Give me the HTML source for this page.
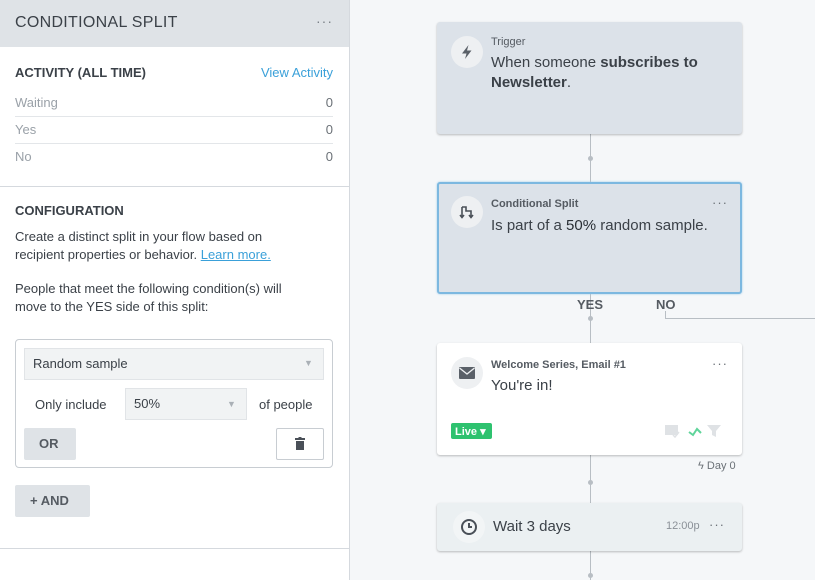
<!DOCTYPE html>
<html><head><style>
*{box-sizing:border-box;margin:0;padding:0}
body{width:815px;height:580px;overflow:hidden;background:#f5f7f9;font-family:"Liberation Sans",sans-serif;color:#3b4148;position:relative}
.a{position:absolute}
#left{left:0;top:0;width:350px;height:580px;background:#fff;border-right:1px solid #d5d9de}
.hdr{left:0;top:0;width:349px;height:47px;background:#dfe3e7}
.t{position:absolute;white-space:nowrap}
.row{position:absolute;left:15px;width:318px;font-size:13px;color:#9aa1a8}
.row span{position:absolute;right:0;color:#6b7177}
.sep{position:absolute;left:15px;width:318px;height:1px;background:#e3e6e9}
.card{position:absolute;left:437px;width:305px;border-radius:3px;box-shadow:0 1px 2px rgba(0,0,0,.25)}
.ic{position:absolute;left:14px;top:14px;width:32px;height:32px;border-radius:50%;background:#eef0f2}
.dots{position:absolute;right:14px;top:13px;font-size:13px;letter-spacing:1px;color:#6b7177}
.ln{position:absolute;left:590px;width:1px;background:#b8bec4}
.dot{position:absolute;left:588px;width:5px;height:5px;border-radius:50%;background:#b8bec4}
</style></head><body>
<div id="left" class="a">
<div class="a hdr"></div>
<div class="t" style="left:15px;top:14px;font-size:16px;letter-spacing:.3px;color:#3b4148">CONDITIONAL SPLIT</div>
<div class="t" style="left:316px;top:13px;font-size:14px;letter-spacing:1px;color:#7a8087">···</div>
<div class="t" style="left:15px;top:65px;font-size:13px;font-weight:bold">ACTIVITY (ALL TIME)</div>
<div class="t" style="right:16px;top:65px;font-size:13px;color:#3aa0d9">View Activity</div>
<div class="row" style="top:95px">Waiting<span>0</span></div>
<div class="sep" style="top:116px"></div>
<div class="row" style="top:122px">Yes<span>0</span></div>
<div class="sep" style="top:143px"></div>
<div class="row" style="top:149px">No<span>0</span></div>
<div class="a" style="left:0;top:186px;width:349px;height:1px;background:#d5d9de"></div>
<div class="t" style="left:15px;top:203px;font-size:13px;font-weight:bold">CONFIGURATION</div>
<div class="t" style="left:15px;top:228px;font-size:13px;line-height:18px">Create a distinct split in your flow based on<br>recipient properties or behavior. <span style="color:#3aa0d9;text-decoration:underline">Learn more.</span></div>
<div class="t" style="left:15px;top:280px;font-size:13px;line-height:18px">People that meet the following condition(s) will<br>move to the YES side of this split:</div>
<div class="a" style="left:15px;top:339px;width:318px;height:129px;border:1px solid #c8cdd2;border-radius:4px"></div>
<div class="a" style="left:24px;top:348px;width:300px;height:32px;background:#f1f3f4;border:1px solid #e1e4e7"></div>
<div class="t" style="left:33px;top:356px;font-size:13px">Random sample</div>
<div class="t" style="left:304px;top:358px;font-size:9px;color:#aab0b6">▼</div>
<div class="t" style="left:35px;top:397px;font-size:13px">Only include</div>
<div class="a" style="left:125px;top:388px;width:122px;height:32px;background:#f1f3f4;border:1px solid #e1e4e7"></div>
<div class="t" style="left:134px;top:396px;font-size:13px">50%</div>
<div class="t" style="left:227px;top:399px;font-size:9px;color:#aab0b6">▼</div>
<div class="t" style="left:259px;top:397px;font-size:13px">of people</div>
<div class="a" style="left:24px;top:428px;width:52px;height:32px;background:#dfe3e7;border-radius:2px"></div>
<div class="t" style="left:39px;top:436px;font-size:13px;font-weight:bold;color:#555b62">OR</div>
<div class="a" style="left:276px;top:428px;width:48px;height:32px;border:1px solid #c8cdd2;border-radius:2px"></div>
<svg class="a" style="left:295px;top:437px" width="10" height="13" viewBox="0 0 10 13"><rect x="0" y="1" width="10" height="2" fill="#4a5058"/><rect x="3.5" y="0" width="3" height="2" fill="#4a5058"/><rect x="1" y="4" width="8" height="9" fill="#4a5058"/></svg>
<div class="a" style="left:15px;top:485px;width:75px;height:32px;background:#dfe3e7;border-radius:2px"></div>
<div class="t" style="left:30px;top:493px;font-size:13px;font-weight:bold;color:#555b62">+ AND</div>
<div class="a" style="left:0;top:548px;width:349px;height:1px;background:#d5d9de"></div>
</div>

<div class="ln" style="top:134px;height:48px"></div><div class="dot" style="top:156px"></div>
<div class="ln" style="top:293px;height:50px"></div><div class="dot" style="top:316px"></div>
<div class="a" style="left:665px;top:311px;width:1px;height:8px;background:#b8bec4"></div>
<div class="a" style="left:665px;top:318px;width:150px;height:1px;background:#b8bec4"></div>
<div class="t" style="left:577px;top:297px;font-size:13px;font-weight:bold;color:#555b62">YES</div>
<div class="t" style="left:656px;top:297px;font-size:13px;font-weight:bold;color:#555b62">NO</div>
<div class="ln" style="top:455px;height:48px"></div><div class="dot" style="top:480px"></div>
<div class="ln" style="top:551px;height:29px"></div><div class="dot" style="top:573px"></div>
<div class="t" style="left:698px;top:460px;font-size:11px;color:#6b7177">ϟ Day 0</div>

<div class="card" style="top:22px;height:112px;background:#dce2e9">
<div class="ic"><svg width="32" height="32" viewBox="0 0 32 32"><path d="M17.5 9 L11 17.5 H15.5 L14 23 L20.5 14.5 H16 Z" fill="#5a6068"/></svg></div>
<div class="t" style="left:54px;top:14px;font-size:11px;color:#555b62">Trigger</div>
<div class="t" style="left:54px;top:31px;font-size:15px;line-height:20px">When someone <b>subscribes to</b><br><b>Newsletter</b>.</div>
</div>

<div class="card" style="top:182px;height:112px;background:#dce2e9;border:2px solid #7cb8e0;box-shadow:0 0 2px #9ccbe8">
<div class="ic" style="left:12px;top:12px"><svg width="32" height="32" viewBox="0 0 32 32" fill="none" stroke="#4a5058" stroke-width="1.6"><path d="M11 11 H15 V15 H20 V21"/><path d="M11 11 V21"/><path d="M9 19 L11 21.5 L13 19 M18 19 L20 21.5 L22 19"/></svg></div>
<div class="dots" style="right:12px;top:11px">···</div>
<div class="t" style="left:52px;top:14px;font-size:11px;color:#555b62;font-weight:bold">Conditional Split</div>
<div class="t" style="left:52px;top:33px;font-size:15px">Is part of a <span style="color:#2a2f35">50%</span> random sample.</div>
</div>

<div class="card" style="top:343px;height:112px;background:#fff">
<div class="ic"><svg width="32" height="32" viewBox="0 0 32 32"><rect x="8" y="10" width="16" height="12" rx="1" fill="#5a6068"/><path d="M8.5 11 L16 17 L23.5 11" stroke="#eef0f2" stroke-width="1.3" fill="none"/></svg></div>
<div class="dots">···</div>
<div class="t" style="left:54px;top:16px;font-size:11px;color:#555b62;font-weight:bold">Welcome Series, Email #1</div>
<div class="t" style="left:54px;top:34px;font-size:15px">You're in!</div>
<div class="a" style="left:14px;top:80px;width:41px;height:16px;background:#2ec26f;border-radius:2px;color:#fff;font-size:11px;font-weight:bold;padding:2px 0 0 4px">Live ▾</div>
<svg class="a" style="left:228px;top:80px" width="64" height="16" viewBox="0 0 64 16"><rect x="0" y="2" width="13" height="10" fill="#dfe2e5"/><path d="M8 12 L10 14 L14 9" stroke="#dfe2e5" stroke-width="1.5" fill="none"/><path d="M24 9 L28 12 L32 6 L36 10" stroke="#5fd49a" stroke-width="2" fill="none"/><path d="M42 2 H56 L51 8 V14 L47 12 V8 Z" fill="#dfe2e5"/></svg>
</div>

<div class="card" style="top:503px;height:48px;background:#ebf0f2">
<div class="a" style="left:16px;top:8px;width:32px;height:32px;border-radius:50%;background:#f2f5f6"><svg width="32" height="32" viewBox="0 0 32 32" fill="none" stroke="#4a5058" stroke-width="2"><circle cx="16" cy="16" r="7"/><path d="M16 12 V16 H19"/></svg></div>
<div class="t" style="left:56px;top:15px;font-size:15px">Wait 3 days</div>
<div class="t" style="left:229px;top:17px;font-size:11px;color:#8a9097">12:00p</div>
<div class="dots" style="top:14px;right:17px">···</div>
</div>
</body></html>
